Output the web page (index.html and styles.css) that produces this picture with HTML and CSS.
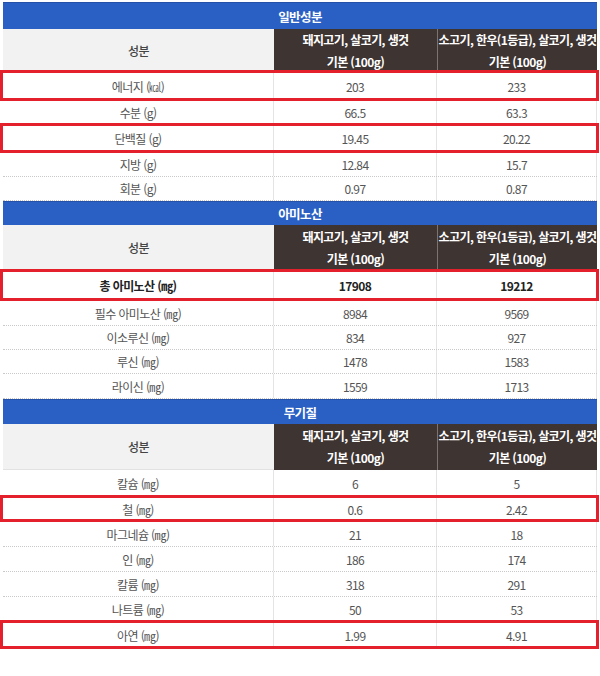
FILE: index.html
```html
<!DOCTYPE html>
<html lang="ko">
<head>
<meta charset="utf-8">
<link rel="stylesheet" href="styles.css">
</head>
<body>
<div class="sheet">
  <section class="sec">
    <div class="title t27">일반성분</div>
    <div class="head h43">
      <div class="hname">성분</div>
      <div class="hcol">돼지고기, 살코기, 생것<br>기본 (100g)</div>
      <div class="hcol">소고기, 한우(1등급), 살코기, 생것<br>기본 (100g)</div>
    </div>
    <div class="row hl r29"><div class="c">에너지 (㎉)</div><div class="c">203</div><div class="c">233</div></div>
    <div class="row r24"><div class="c">수분 (g)</div><div class="c">66.5</div><div class="c">63.3</div></div>
    <div class="row hl r28"><div class="c">단백질 (g)</div><div class="c">19.45</div><div class="c">20.22</div></div>
    <div class="row r24"><div class="c">지방 (g)</div><div class="c">12.84</div><div class="c">15.7</div></div>
    <div class="row r24"><div class="c">회분 (g)</div><div class="c">0.97</div><div class="c">0.87</div></div>
  </section>
  <section class="sec">
    <div class="title t24">아미노산</div>
    <div class="head h46">
      <div class="hname">성분</div>
      <div class="hcol">돼지고기, 살코기, 생것<br>기본 (100g)</div>
      <div class="hcol">소고기, 한우(1등급), 살코기, 생것<br>기본 (100g)</div>
    </div>
    <div class="row hl bold r30"><div class="c">총 아미노산 (㎎)</div><div class="c">17908</div><div class="c">19212</div></div>
    <div class="row r25"><div class="c">필수 아미노산 (㎎)</div><div class="c">8984</div><div class="c">9569</div></div>
    <div class="row r24"><div class="c">이소루신 (㎎)</div><div class="c">834</div><div class="c">927</div></div>
    <div class="row r24"><div class="c">루신 (㎎)</div><div class="c">1478</div><div class="c">1583</div></div>
    <div class="row r25"><div class="c">라이신 (㎎)</div><div class="c">1559</div><div class="c">1713</div></div>
  </section>
  <section class="sec">
    <div class="title t25">무기질</div>
    <div class="head h46">
      <div class="hname">성분</div>
      <div class="hcol">돼지고기, 살코기, 생것<br>기본 (100g)</div>
      <div class="hcol">소고기, 한우(1등급), 살코기, 생것<br>기본 (100g)</div>
    </div>
    <div class="row r27"><div class="c">칼슘 (㎎)</div><div class="c">6</div><div class="c">5</div></div>
    <div class="row hl r25"><div class="c">철 (㎎)</div><div class="c">0.6</div><div class="c">2.42</div></div>
    <div class="row r25"><div class="c">마그네슘 (㎎)</div><div class="c">21</div><div class="c">18</div></div>
    <div class="row r25"><div class="c">인 (㎎)</div><div class="c">186</div><div class="c">174</div></div>
    <div class="row r25"><div class="c">칼륨 (㎎)</div><div class="c">318</div><div class="c">291</div></div>
    <div class="row r25"><div class="c">나트륨 (㎎)</div><div class="c">50</div><div class="c">53</div></div>
    <div class="row hl r27"><div class="c">아연 (㎎)</div><div class="c">1.99</div><div class="c">4.91</div></div>
  </section>
</div>
</body>
</html>
```

FILE: styles.css
```css
html, body {
  margin: 0;
  padding: 0;
  background: #ffffff;
}
body {
  font-family: "Noto Sans CJK KR", "Noto Sans", sans-serif;
  font-size: 12px;
  color: #555555;
  letter-spacing: -0.6px;
}
.sheet {
  width: 594px;
  margin: 2px 0 0 3px;
  display: flex;
  flex-direction: column;
}
.sec {
  display: flex;
  flex-direction: column;
}
.title {
  background: #2a5fc3;
  color: #ffffff;
  font-weight: 700;
  font-size: 12.5px;
  display: flex;
  align-items: center;
  justify-content: center;
  box-sizing: border-box;
  border-top: 1px solid #2552a8;
}
.t27 { height: 27px; }
.t24 { height: 24px; }
.t25 { height: 25px; }
.head {
  display: grid;
  grid-template-columns: 271px 163px 160px;
  box-sizing: border-box;
}
.h43 { height: 43px; }
.h46 { height: 46px; }
.hname {
  background: #f2f2f2;
  color: #444444;
  font-weight: 500;
  display: flex;
  align-items: center;
  justify-content: center;
  border-bottom: 1px solid #e2e2e2;
}
.hcol {
  background: #3e3432;
  color: #ffffff;
  font-weight: 700;
  line-height: 22px;
  text-align: center;
  display: flex;
  align-items: center;
  justify-content: center;
}
.hcol + .hcol {
  border-left: 1px solid #7d7472;
}
.row {
  display: grid;
  grid-template-columns: 271px 163px 160px;
  box-sizing: border-box;
  border-bottom: 1px dotted #c9c9c9;
  position: relative;
}
.r24 { height: 24px; }
.r25 { height: 25px; }
.r27 { height: 27px; }
.r28 { height: 28px; }
.r29 { height: 29px; }
.r30 { height: 30px; }
.c {
  display: flex;
  align-items: center;
  justify-content: center;
  border-right: 1px solid #e4e4e4;
}
.c:first-child {
  border-right: 1px solid #e4e4e4;
}
.bold .c {
  font-weight: 700;
  color: #222222;
}
.hl {
  z-index: 1;
}
.hl::after {
  content: "";
  position: absolute;
  top: -2px;
  bottom: -1px;
  left: -3px;
  right: -2px;
  border: 3px solid #e3202b;
  pointer-events: none;
}
```
